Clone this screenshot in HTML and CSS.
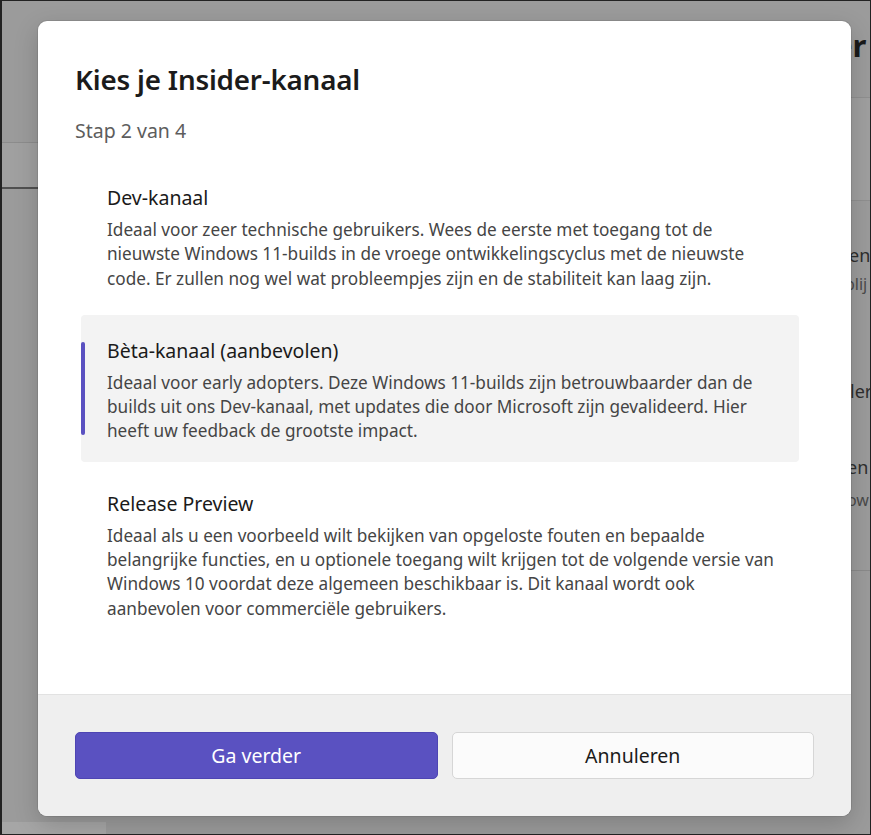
FILE: index.html
```html
<!DOCTYPE html>
<html lang="nl">
<head>
<meta charset="utf-8">
<title>Kies je Insider-kanaal</title>
<link rel="stylesheet" href="styles.css">
</head>
<body>
<div class="screen">
  <div class="backdrop">
    <div class="bd-row">
      <div class="bd-left">
        <div class="bd-band"></div>
      </div>
      <div class="bd-mid"></div>
      <div class="bd-right">
        <div class="bd-title">er</div>
        <div class="bd-card bd-card-top"></div>
        <div class="bd-text bd-t1">en</div>
        <div class="bd-sub bd-t2">blij</div>
        <div class="bd-text bd-t3">ler</div>
        <div class="bd-text bd-t4">en</div>
        <div class="bd-sub bd-t5">ow</div>
        <div class="bd-rule"></div>
      </div>
    </div>
    <div class="bd-bottom"><div class="bd-bottom-tab"></div></div>
  </div>

  <div class="overlay">
    <div class="dialog">
      <div class="dialog-body">
        <h1 class="dialog-title">Kies je Insider-kanaal</h1>
        <p class="dialog-step">Stap 2 van 4</p>
        <div class="channels">
          <div class="channel">
            <div class="channel-name">Dev-kanaal</div>
            <div class="channel-desc">Ideaal voor zeer technische gebruikers. Wees de eerste met toegang tot de<br>nieuwste Windows 11-builds in de vroege ontwikkelingscyclus met de nieuwste<br>code. Er zullen nog wel wat probleempjes zijn en de stabiliteit kan laag zijn.</div>
          </div>
          <div class="channel channel-selected">
            <div class="channel-name">Bèta-kanaal (aanbevolen)</div>
            <div class="channel-desc">Ideaal voor early adopters. Deze Windows 11-builds zijn betrouwbaarder dan de<br>builds uit ons Dev-kanaal, met updates die door Microsoft zijn gevalideerd. Hier<br>heeft uw feedback de grootste impact.</div>
          </div>
          <div class="channel">
            <div class="channel-name">Release Preview</div>
            <div class="channel-desc">Ideaal als u een voorbeeld wilt bekijken van opgeloste fouten en bepaalde<br>belangrijke functies, en u optionele toegang wilt krijgen tot de volgende versie van<br>Windows 10 voordat deze algemeen beschikbaar is. Dit kanaal wordt ook<br>aanbevolen voor commerciële gebruikers.</div>
          </div>
        </div>
      </div>
      <div class="dialog-footer">
        <button class="btn btn-primary">Ga verder</button>
        <button class="btn btn-secondary">Annuleren</button>
      </div>
    </div>
  </div>
</div>
</body>
</html>
```

FILE: styles.css
```css
* { box-sizing: border-box; }
html, body { margin: 0; padding: 0; }
body {
  font-family: "Noto Sans", "Open Sans", sans-serif;
  background: #1e1e1e;
}
.screen {
  position: relative;
  width: 871px;
  height: 835px;
  border: 1px solid #222;
  border-left-width: 2px;
  overflow: hidden;
  background: #9b9b9b;
}
.backdrop {
  display: flex;
  flex-direction: column;
  height: 100%;
}
.bd-row {
  flex: 1;
  display: flex;
}
.bd-left {
  width: 36px;
  padding-top: 141px;
}
.bd-band {
  height: 47px;
  background: #a0a0a0;
  border-top: 1px solid #8c8c8c;
  border-bottom: 2px solid #505050;
}
.bd-mid { flex: 1; }
.bd-right {
  width: 36px;
  display: flex;
  flex-direction: column;
  overflow: hidden;
  white-space: nowrap;
  color: #3a3a3a;
}
.bd-title {
  margin-top: 26px;
  height: 36px;
  font-size: 31px;
  font-weight: 700;
  line-height: 36px;
  color: #1a1a1a;
  padding-left: 0;
}
.bd-card-top {
  margin-top: 34px;
  height: 104px;
  border-top: 1px solid #8f8f8f;
  border-bottom: 1px solid #8f8f8f;
  background: #9f9f9f;
}
.bd-text {
  font-size: 18px;
  line-height: 22px;
  color: #2e2e2e;
  padding-left: 15px;
}
.bd-sub {
  font-size: 16px;
  line-height: 20px;
  color: #4a4a4a;
  padding-left: 13px;
}
.bd-t1 { margin-top: 43px; }
.bd-t2 { margin-top: 8px; padding-left: 11px; }
.bd-t3 { margin-top: 86px; padding-left: 16px; }
.bd-t4 { margin-top: 54px; padding-left: 13px; }
.bd-t5 { margin-top: 12px; }
.bd-rule {
  margin-top: 60px;
  border-top: 1px solid #8a8a8a;
}
.bd-bottom {
  height: 12px;
  display: flex;
}
.bd-bottom-tab {
  width: 104px;
  background: #a6a6a6;
}

.overlay {
  position: absolute;
  inset: 0;
  padding: 20px 19px 18px 36px;
  display: flex;
}
.dialog {
  flex: 1;
  display: flex;
  flex-direction: column;
  background: #ffffff;
  border-radius: 9px;
  overflow: hidden;
  box-shadow: 0 0 0 1px rgba(0,0,0,0.08), 0 8px 24px rgba(0,0,0,0.18);
}
.dialog-body {
  flex: 1;
  padding: 39px 52px 0 37px;
}
.dialog-title {
  margin: 0;
  font-size: 27.8px;
  font-weight: 600;
  line-height: 38px;
  color: #1b1b1b;
  letter-spacing: -0.2px;
}
.dialog-step {
  margin: 20px 0 0;
  font-size: 19.5px;
  line-height: 26px;
  color: #5d5d5d;
}
.channels {
  margin-top: 18px;
  margin-left: 6px;
  display: flex;
  flex-direction: column;
  gap: 6px;
}
.channel {
  position: relative;
  padding: 22px 20px 18px 26px;
  border-radius: 4px;
}
.channel-name {
  font-size: 19.5px;
  line-height: 28px;
  color: #1a1a1a;
}
.channel-desc {
  margin-top: 6px;
  font-size: 17.2px;
  line-height: 24.3px;
  color: #454545;
  white-space: nowrap;
}
.channel-selected {
  background: #f3f3f3;
}
.channel-selected::before {
  content: "";
  position: absolute;
  left: 0;
  top: 27px;
  bottom: 27px;
  width: 4px;
  border-radius: 2px;
  background: #5a51c1;
}
.dialog-footer {
  height: 122px;
  background: #efefef;
  border-top: 1px solid #e2e2e2;
  display: flex;
  align-items: center;
  gap: 14px;
  padding: 0 37px 0 37px;
}
.btn {
  flex: 1;
  height: 47px;
  border-radius: 5px;
  font-family: inherit;
  font-size: 19.5px;
  cursor: pointer;
}
.btn-primary {
  background: #5a51c1;
  color: #ffffff;
  border: 1px solid #4e45b3;
}
.btn-secondary {
  background: #fbfbfb;
  color: #1a1a1a;
  border: 1px solid #d6d6d6;
}
```
